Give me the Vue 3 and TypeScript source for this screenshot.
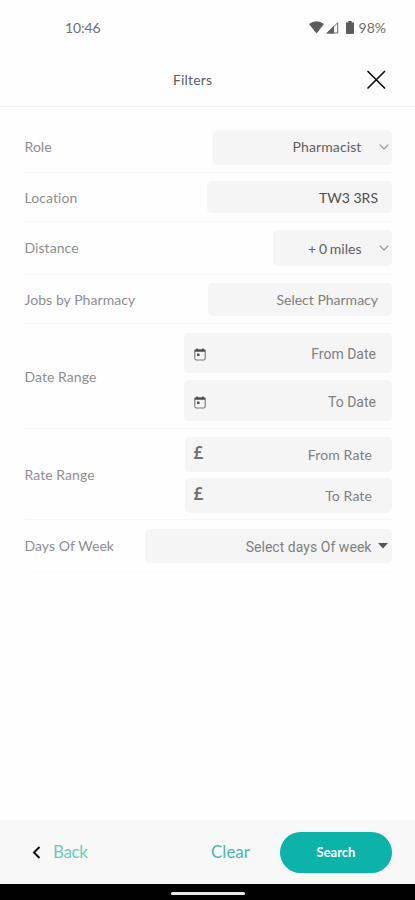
<script setup lang="ts">
import { ref } from 'vue'

interface Field {
  text: string
  icon?: 'calendar' | 'pound'
  arrow?: 'chevron' | 'caret'
}
interface FilterRow {
  key: string
  label: string
  fields: Field[]
}

const rows = ref<FilterRow[]>([
  { key: 'role', label: 'Role', fields: [{ text: 'Pharmacist', arrow: 'chevron' }] },
  { key: 'location', label: 'Location', fields: [{ text: 'TW3 3RS' }] },
  { key: 'distance', label: 'Distance', fields: [{ text: '+ 0 miles', arrow: 'chevron' }] },
  { key: 'jobs', label: 'Jobs by Pharmacy', fields: [{ text: 'Select Pharmacy' }] },
  { key: 'date', label: 'Date Range', fields: [{ text: 'From Date', icon: 'calendar' }, { text: 'To Date', icon: 'calendar' }] },
  { key: 'rate', label: 'Rate Range', fields: [{ text: 'From Rate', icon: 'pound' }, { text: 'To Rate', icon: 'pound' }] },
  { key: 'days', label: 'Days Of Week', fields: [{ text: 'Select days Of week', arrow: 'caret' }] },
])
</script>

<template>
  <div class="screen">
    <div class="status">
      <span class="time">10:46</span>
      <div class="indicators">
        <svg class="wifi" width="15" height="13" viewBox="0 0 15 13"><path d="M0 3Q7.500-2.500 15 3L7.500 12.500Z" fill="#5c5c5c" /></svg>
        <svg class="signal" width="13" height="13" viewBox="0 0 13 13">
          <path d="M0 12.500 8 4.500V12.500Z" fill="#606060" />
          <path d="M1.500 12 11.700 1.700V12Z" fill="none" stroke="#686868" stroke-width="1" />
        </svg>
        <svg class="battery" width="8" height="13" viewBox="0 0 8 13"><path d="M2.300 0H5.700V1.300H7Q8 1.300 8 2.300V12Q8 13 7 13H1Q0 13 0 12V2.300Q0 1.300 1 1.300H2.300Z" fill="#5c5c5c" /></svg>
        <span class="percent">98%</span>
      </div>
    </div>

    <header class="header">
      <h1 class="title">Filters</h1>
      <button class="close" aria-label="Close">
        <svg width="20" height="20" viewBox="0 0 20 20"><path d="M2 1.500 18.500 18M18.500 1.500 2 18" stroke="#111" stroke-width="1.700" stroke-linecap="round" /></svg>
      </button>
    </header>

    <main class="filters">
      <section v-for="row in rows" :key="row.key" class="row" :class="row.key">
        <span class="label">{{ row.label }}</span>
        <div class="fields">
          <div v-for="field in row.fields" :key="field.text" class="field">
            <svg v-if="field.icon === 'calendar'" class="calendar" width="12" height="13" viewBox="0 0 12 13">
              <rect x="0.800" y="1.500" width="10.400" height="10.500" rx="1.600" fill="none" stroke="#777" stroke-width="1.100" />
              <path d="M.8 2.800H11.200M3 .5V3M9 .5V3" stroke="#4c4c4c" stroke-width="1.700" />
              <rect x="3" y="5.500" width="2.500" height="2.500" fill="#4c4c4c" />
            </svg>
            <span v-else-if="field.icon === 'pound'" class="pound">£</span>
            <span class="value">{{ field.text }}</span>
            <svg v-if="field.arrow === 'chevron'" class="chevron" width="10" height="6" viewBox="0 0 10 6"><path d="M.7.7 5 5 9.300.7" fill="none" stroke="#909090" stroke-width="1.100" /></svg>
            <svg v-else-if="field.arrow === 'caret'" class="caret" width="10" height="6" viewBox="0 0 10 6"><path d="M0 0H10L5 5.500Z" fill="#555" /></svg>
          </div>
        </div>
      </section>
    </main>

    <footer class="actions">
      <button class="back">
        <svg width="9" height="13" viewBox="0 0 9 13"><path d="M7.500 1 2 6.500 7.500 12" fill="none" stroke="#111" stroke-width="2" /></svg>
        <span>Back</span>
      </button>
      <button class="clear">Clear</button>
      <button class="search">Search</button>
    </footer>
    <div class="navbar"><div class="handle"></div></div>
  </div>
</template>

<style>
body {
  background: #fff;
}
</style>

<style scoped>
.screen {
  width: 415px;
  height: 900px;
  display: flex;
  flex-direction: column;
  background: #fefefe;
  font-family: Lato, sans-serif;
  font-variant-ligatures: none;
  color: #606060;
  overflow: hidden;
}
.screen * {
  box-sizing: border-box;
}
button {
  border: 0;
  padding: 0;
  background: none;
  font: inherit;
}
svg {
  display: block;
  flex: none;
}
.status {
  height: 54px;
  padding: 0 29px 0 65px;
  display: flex;
  align-items: center;
  justify-content: space-between;
  font-size: 14px;
  color: #707070;
}
.time {
  letter-spacing: -0.1px;
}
.indicators {
  display: flex;
  align-items: center;
}
.signal {
  margin-left: 2px;
}
.battery {
  margin: 0 5px 0 7px;
}
.header {
  height: 53px;
  padding-right: 29px;
  border-bottom: 1px solid #f0f0f0;
  display: grid;
  grid-template-columns: 173px 1fr auto;
  align-items: center;
}
.title {
  grid-column: 2;
  margin: 0;
  font-size: 14px;
  font-weight: 400;
  line-height: 20px;
  letter-spacing: 0.15px;
  color: #606060;
}
.filters {
  flex: 1;
  padding: 15px 23px 0 24.5px;
}
.row {
  display: flex;
  align-items: center;
  justify-content: space-between;
  border-bottom: 1px solid #f6f6f6;
}
.label {
  font-size: 14px;
  letter-spacing: 0.06px;
  color: #8e8e8e;
  white-space: nowrap;
}
.role .label,
.distance .label,
.days .label {
  padding-bottom: 1px;
}
.fields {
  display: flex;
  flex-direction: column;
}
.field {
  display: flex;
  align-items: center;
  border-radius: 5px;
  background: #f5f5f5;
  font-size: 14px;
  white-space: nowrap;
}
.value {
  margin-left: auto;
}
.calendar {
  margin: 2px 0 0 10px;
}
.pound {
  margin: -2px 0 0 8.5px;
  font-family: "Noto Sans", sans-serif;
  font-size: 17px;
  font-weight: 600;
  line-height: 20px;
  color: #707070;
}
.chevron {
  margin: 0 3px 0 17.5px;
}
.caret {
  margin: -2px 4.5px 0 6px;
}
.role {
  height: 51px;
}
.role .field {
  width: 179px;
  height: 35px;
  padding-bottom: 1px;
  letter-spacing: 0.12px;
}
.location {
  height: 49px;
}
.location .field {
  width: 185px;
  height: 32px;
  padding-right: 14px;
  color: #505050;
}
.distance {
  height: 53px;
}
.distance .field {
  width: 119px;
  height: 36px;
  word-spacing: -0.8px;
}
.jobs {
  height: 49px;
}
.jobs .field {
  width: 184.5px;
  height: 33px;
  padding-right: 14px;
  color: #808080;
}
.date {
  height: 105px;
}
.date .fields {
  gap: 7px;
  padding-top: 1px;
}
.date .field {
  width: 208px;
  height: 40px;
  padding: 2px 16px 0 0;
  font-family: Roboto, sans-serif;
  color: #808080;
}
.date .field:last-child {
  height: 41px;
  padding-top: 3px;
}
.rate {
  height: 91px;
}
.rate .fields {
  gap: 6px;
  padding-top: 1px;
}
.rate .field {
  width: 207px;
  height: 35px;
  padding-right: 20px;
  letter-spacing: 0.12px;
  color: #808080;
}
.days {
  height: 53px;
  border-bottom-color: #fbfbfb;
}
.days .field {
  width: 247px;
  height: 34px;
  padding-top: 2px;
  font-family: Roboto, sans-serif;
  letter-spacing: 0.04px;
  color: #808080;
}
.actions {
  height: 64px;
  padding: 0 23px 0 32px;
  display: flex;
  align-items: center;
  background: #f8f8f8;
}
.back {
  display: flex;
  align-items: center;
  gap: 12px;
  font-size: 17px;
  letter-spacing: -0.4px;
  color: #6acdbc;
}
.back span {
  padding-bottom: 2px;
}
.clear {
  margin-left: auto;
  padding-bottom: 1px;
  font-size: 17px;
  color: #4cb9aa;
}
.search {
  width: 112px;
  height: 41px;
  margin-left: 30px;
  padding-bottom: 1px;
  border-radius: 21px;
  background: #0bb3a9;
  color: #fff;
  font-size: 13px;
  font-weight: 700;
}
.navbar {
  height: 16px;
  padding-top: 2px;
  display: flex;
  align-items: center;
  justify-content: center;
  background: #000;
}
.handle {
  width: 74px;
  height: 3px;
  border-radius: 2px;
  background: #e8e8e8;
}
</style>
